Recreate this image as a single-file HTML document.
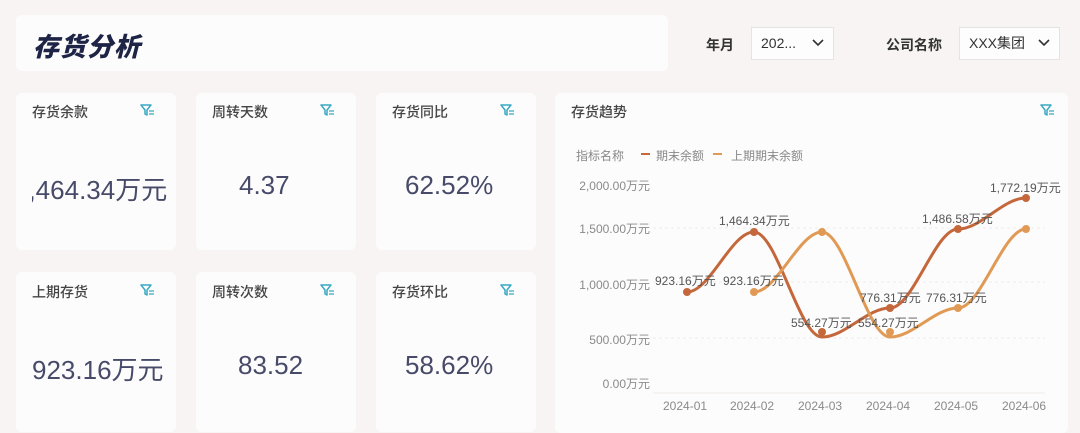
<!DOCTYPE html>
<html><head><meta charset="utf-8"><style>
*{margin:0;padding:0;box-sizing:border-box}
body{width:1080px;height:428px;background:#f7f4f3;font-family:"Liberation Sans","Noto Sans CJK SC",sans-serif;position:relative;overflow:hidden;color:#333}
.card{position:absolute;background:#fdfcfc;border-radius:6px}
.t{position:absolute;font-size:14px;color:#444;font-weight:500}
.f{position:absolute;width:14px;height:12px}
.v{position:absolute;font-size:26px;color:#474b69;white-space:nowrap}
.clip{position:absolute;overflow:hidden}
.sel{position:absolute;border:1px solid #e6e3e3;background:#fefdfd;height:33px;font-size:14px;color:#333;line-height:31px;padding-left:9px}
.sel svg{position:absolute;right:9px;top:11px}
.lab{position:absolute;font-size:14px;font-weight:bold;color:#333}
.ax{position:absolute;font-size:12px;color:#8a8a8a;text-align:right;width:80px}
.xl{position:absolute;font-size:12px;color:#8a8a8a}
.dl{position:absolute;font-size:12px;color:#555;white-space:nowrap}
</style></head><body>
<div class="card" style="left:16px;top:15px;width:652px;height:56px"></div>
<div style="position:absolute;left:33px;top:27px;font-size:26px;font-weight:900;font-style:italic;color:#1e2445;letter-spacing:1px;font-family:'Noto Sans CJK SC',sans-serif">存货分析</div>
<div class="lab" style="left:706px;top:35px">年月</div>
<div class="sel" style="left:751px;top:27px;width:83px">202...<svg width="12" height="8"><path d="M1 1L6 6L11 1" stroke="#333" stroke-width="1.6" fill="none"/></svg></div>
<div class="lab" style="left:886px;top:35px">公司名称</div>
<div class="sel" style="left:959px;top:27px;width:101px">XXX集团<svg width="12" height="8"><path d="M1 1L6 6L11 1" stroke="#333" stroke-width="1.6" fill="none"/></svg></div>

<div class="card" style="left:16px;top:93px;width:160px;height:157px"></div>
<div class="card" style="left:196px;top:93px;width:160px;height:157px"></div>
<div class="card" style="left:376px;top:93px;width:160px;height:157px"></div>
<div class="card" style="left:16px;top:272px;width:160px;height:160px"></div>
<div class="card" style="left:196px;top:272px;width:160px;height:160px"></div>
<div class="card" style="left:376px;top:272px;width:160px;height:160px"></div>
<div class="card" style="left:555px;top:93px;width:513px;height:340px"></div>

<div class="t" style="left:32px;top:102px">存货余款</div>
<div class="t" style="left:212px;top:102px">周转天数</div>
<div class="t" style="left:392px;top:102px">存货同比</div>
<div class="t" style="left:32px;top:282px">上期存货</div>
<div class="t" style="left:212px;top:282px">周转次数</div>
<div class="t" style="left:392px;top:282px">存货环比</div>
<div class="t" style="left:571px;top:102px">存货趋势</div>

<svg width="0" height="0" style="position:absolute"><defs><g id="fi"><path d="M1 1H11L7 6V11L5 10V6Z" fill="none" stroke="#3aa9c4" stroke-width="1.5" stroke-linejoin="round"/><path d="M9 7H14M9 10H14" stroke="#3aa9c4" stroke-width="1.3"/></g></defs></svg>
<svg class="f" style="left:140px;top:104px"><use href="#fi"/></svg>
<svg class="f" style="left:320px;top:104px"><use href="#fi"/></svg>
<svg class="f" style="left:500px;top:104px"><use href="#fi"/></svg>
<svg class="f" style="left:140px;top:284px"><use href="#fi"/></svg>
<svg class="f" style="left:320px;top:284px"><use href="#fi"/></svg>
<svg class="f" style="left:500px;top:284px"><use href="#fi"/></svg>
<svg class="f" style="left:1040px;top:104px"><use href="#fi"/></svg>

<div class="clip" style="left:32px;top:168px;width:140px;height:36px"><div class="v" style="left:-18px;top:2px">1,464.34万元</div></div>
<div class="v" style="left:239px;top:170px">4.37</div>
<div class="v" style="left:405px;top:170px">62.52%</div>
<div class="clip" style="left:32px;top:348px;width:140px;height:36px"><div class="v" style="left:0;top:2px">923.16万元</div></div>
<div class="v" style="left:238px;top:350px">83.52</div>
<div class="v" style="left:405px;top:350px">58.62%</div>

<div style="position:absolute;left:576px;top:147px;font-size:12px;color:#888">指标名称</div>
<div style="position:absolute;left:641px;top:153px;width:9px;height:2px;background:#c8683a"></div>
<div style="position:absolute;left:656px;top:147px;font-size:12px;color:#888">期末余额</div>
<div style="position:absolute;left:713px;top:153px;width:9px;height:2px;background:#e09a55"></div>
<div style="position:absolute;left:731px;top:147px;font-size:12px;color:#888">上期期末余额</div>

<div class="ax" style="left:570px;top:177px">2,000.00万元</div>
<div class="ax" style="left:570px;top:220px">1,500.00万元</div>
<div class="ax" style="left:570px;top:276px">1,000.00万元</div>
<div class="ax" style="left:570px;top:331px">500.00万元</div>
<div class="ax" style="left:570px;top:375px">0.00万元</div>

<svg style="position:absolute;left:0;top:0" width="1080" height="428">
<g stroke="#eeeaea" stroke-width="1" stroke-dasharray="3 3">
<line x1="653" y1="228" x2="1045" y2="228"/><line x1="653" y1="282" x2="1045" y2="282"/><line x1="653" y1="338" x2="1045" y2="338"/></g>
<line x1="653" y1="393" x2="1045" y2="393" stroke="#eeeaea"/>
<path d="M687 292C710 292 731 232 754 232C777 232 799 337 822 337C845 337 867 308 890 308C913 308 935 229 958 229C981 229 1003 198 1026 198" fill="none" stroke="#c4673a" stroke-width="3"/>
<path d="M754 292C777 292 799 232 822 232C845 232 867 337 890 337C913 337 935 308 958 308C981 308 1003 229 1026 229" fill="none" stroke="#e09a55" stroke-width="3"/>
<g fill="#c4673a"><circle cx="687" cy="292" r="4"/><circle cx="754" cy="232" r="4"/><circle cx="822" cy="332" r="4"/><circle cx="890" cy="308" r="4"/><circle cx="958" cy="229" r="4"/><circle cx="1026" cy="198" r="4"/></g>
<g fill="#e09a55"><circle cx="754" cy="292" r="4"/><circle cx="822" cy="232" r="4"/><circle cx="890" cy="332" r="4"/><circle cx="958" cy="308" r="4"/><circle cx="1026" cy="229" r="4"/></g>
</svg>
<div class="dl" style="left:655px;top:272px">923.16万元</div>
<div class="dl" style="left:719px;top:212px">1,464.34万元</div>
<div class="dl" style="left:723px;top:272px">923.16万元</div>
<div class="dl" style="left:791px;top:314px">554.27万元</div>
<div class="dl" style="left:858px;top:314px">554.27万元</div>
<div class="dl" style="left:860px;top:289px">776.31万元</div>
<div class="dl" style="left:926px;top:289px">776.31万元</div>
<div class="dl" style="left:922px;top:210px">1,486.58万元</div>
<div class="dl" style="left:990px;top:179px">1,772.19万元</div>

<div class="xl" style="left:663px;top:399px">2024-01</div>
<div class="xl" style="left:730px;top:399px">2024-02</div>
<div class="xl" style="left:798px;top:399px">2024-03</div>
<div class="xl" style="left:866px;top:399px">2024-04</div>
<div class="xl" style="left:934px;top:399px">2024-05</div>
<div class="xl" style="left:1002px;top:399px">2024-06</div>
</body></html>
